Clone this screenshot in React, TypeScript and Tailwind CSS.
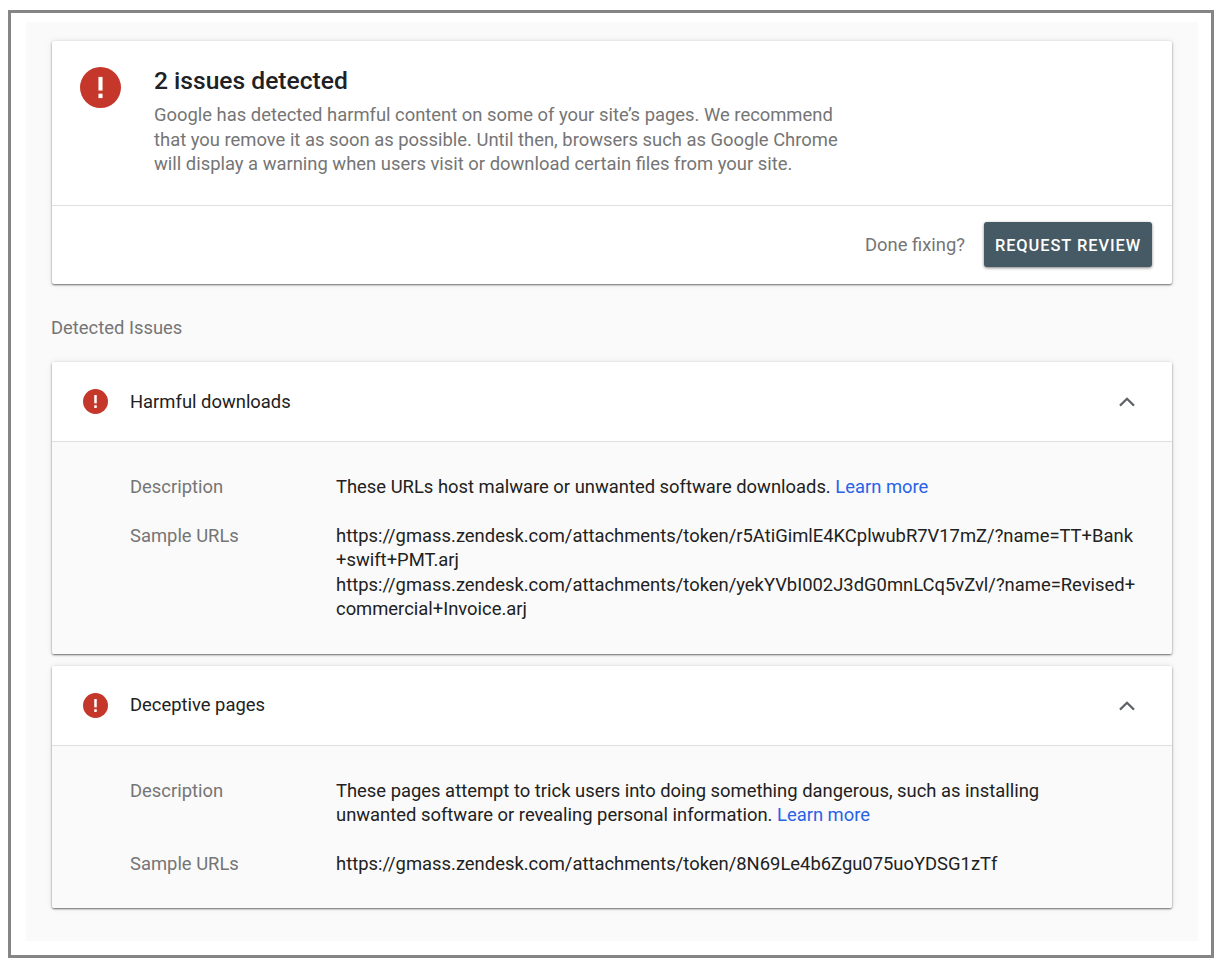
import React from "react";

const ErrorIcon = ({ size }: { size: number }) => (
  <svg width={size} height={size} viewBox="0 0 24 24" className="shrink-0">
    <circle cx="12" cy="12" r="12" fill="#c5372a" />
    <rect x="10.8" y="5.8" width="2.4" height="8" fill="#fff" />
    <rect x="10.8" y="15.6" width="2.4" height="2.6" fill="#fff" />
  </svg>
);

const Chevron = () => (
  <svg width="24" height="24" viewBox="0 0 24 24" className="mr-[33px]">
    <path d="M5 15.6 12 8.8l7 6.8" fill="none" stroke="#5f6368" strokeWidth="2.2" />
  </svg>
);

const Learn = () => <span className="text-[#2962e8]">Learn more</span>;

const Row = ({ label, children }: { label: string; children: React.ReactNode }) => (
  <div className="flex">
    <div className="w-[206px] shrink-0 text-[#757575]">{label}</div>
    <div className="flex-1 text-[#212121] break-words">{children}</div>
  </div>
);

const IssueCard = ({
  title,
  className,
  titleClass,
  children,
}: {
  title: string;
  className: string;
  titleClass?: string;
  children: React.ReactNode;
}) => (
  <section className={`flex flex-col rounded-[2px] shadow-[0_1px_2px_rgba(0,0,0,0.55),0_0_6px_rgba(0,0,0,0.1)] ${className}`}>
    <header className="h-[80px] shrink-0 bg-white border-b border-[#e0e0e0] flex items-center pl-[31px] rounded-t-[2px]">
      <ErrorIcon size={25} />
      <h2 className={`ml-[22px] flex-1 text-[#212121] ${titleClass ?? ""}`}>{title}</h2>
      <Chevron />
    </header>
    <div className="flex-1 bg-[#fafafa] pl-[78px] rounded-b-[2px] flex flex-col gap-[24.5px] pt-[32.5px]">{children}</div>
  </section>
);

export default function App() {
  return (
    <div className="w-[1224px] h-[972px] bg-white pt-[10px] pl-[8px] font-['Roboto',sans-serif] text-[18.4px] leading-[24.5px]">
      <div className="w-[1206px] h-[948px] border-[3px] border-[#858585] pt-[9px] pl-[15px]">
        <main className="w-[1172px] h-[919px] bg-[#fafafa] pt-[19px] px-[26px]">
          <section className="h-[243px] bg-white rounded-[2px] shadow-[0_1px_2px_rgba(0,0,0,0.55),0_0_6px_rgba(0,0,0,0.1)]">
            <div className="h-[165px] border-b border-[#e0e0e0] flex pl-[28px] pt-[26px]">
              <ErrorIcon size={41} />
              <div className="ml-[33px]">
                <h1 className="text-[24.6px] font-medium leading-[30px] -mt-[1px] text-[#202124]">2 issues detected</h1>
                <p className="mt-[7px] text-[#757575]">
                  Google has detected harmful content on some of your site’s pages. We recommend
                  <br />
                  that you remove it as soon as possible. Until then, browsers such as Google Chrome
                  <br />
                  will display a warning when users visit or download certain files from your site.
                </p>
              </div>
            </div>
            <div className="h-[78px] flex items-center justify-end pr-[20px]">
              <span className="text-[#757575] mr-[19px]">Done fixing?</span>
              <button className="w-[168px] h-[45px] -mt-[2px] pt-[4px] rounded-[3px] bg-[#455a64] text-white text-[16.4px] font-medium tracking-[0.95px] shadow-[0_1px_3px_rgba(0,0,0,0.5)]">
                REQUEST REVIEW
              </button>
            </div>
          </section>

          <h3 className="mt-[31px] -ml-[1px] text-[#757575] leading-[26px]">Detected Issues</h3>

          <IssueCard title="Harmful downloads" titleClass="pt-[2px]" className="mt-[21px] h-[292px]">
            <Row label="Description">
              These URLs host malware or unwanted software downloads. <Learn />
            </Row>
            <Row label="Sample URLs">
              https://gmass.zendesk.com/attachments/token/r5AtiGimlE4KCplwubR7V17mZ/?name=TT+Bank
              <br />
              +swift+PMT.arj
              <br />
              https://gmass.zendesk.com/attachments/token/yekYVbI002J3dG0mnLCq5vZvl/?name=Revised+
              <br />
              commercial+Invoice.arj
            </Row>
          </IssueCard>

          <IssueCard title="Deceptive pages" className="mt-[12px] h-[242px]">
            <Row label="Description">
              These pages attempt to trick users into doing something dangerous, such as installing
              <br />
              unwanted software or revealing personal information. <Learn />
            </Row>
            <Row label="Sample URLs">https://gmass.zendesk.com/attachments/token/8N69Le4b6Zgu075uoYDSG1zTf</Row>
          </IssueCard>
        </main>
      </div>
    </div>
  );
}
